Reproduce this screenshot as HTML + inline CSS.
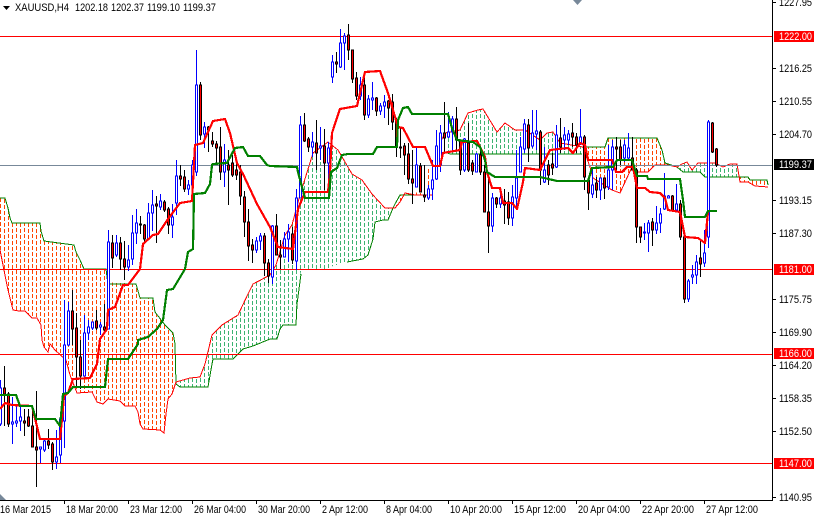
<!DOCTYPE html>
<html><head><meta charset="utf-8"><title>XAUUSD,H4</title>
<style>
html,body{margin:0;padding:0;background:#fff;width:814px;height:516px;overflow:hidden}
svg{display:block}
text{font-family:"Liberation Sans",sans-serif;font-size:11px;fill:#000}
.w{fill:#fff}
</style></head><body>
<svg width="814" height="516" viewBox="0 0 814 516" xmlns="http://www.w3.org/2000/svg">
<defs>
<pattern id="o" patternUnits="userSpaceOnUse" width="16" height="6" shape-rendering="crispEdges"><g fill="#ff4500"><rect x="0" y="0" width="1" height="4"/><rect x="4" y="1" width="1" height="4"/><rect x="8" y="0" width="1" height="4"/><rect x="12" y="1" width="1" height="4"/></g></pattern>
<pattern id="g" patternUnits="userSpaceOnUse" width="16" height="6" shape-rendering="crispEdges"><g fill="#3cb371"><rect x="0" y="0" width="1" height="4"/><rect x="4" y="1" width="1" height="4"/><rect x="8" y="0" width="1" height="4"/><rect x="12" y="1" width="1" height="4"/></g></pattern>
</defs>
<rect width="814" height="516" fill="#fff"/>

<!-- clouds fill -->
<g shape-rendering="crispEdges">
<polygon fill="url(#o)" points="0,198 5,198 8,208 10,218 12,223 40,223 41,231 44,241 74,245 76,252 80,260 84,269 106,269 108,282 136,284 140,298 153,298 155,312 165,325 173,333 175,344 176,382 172,394 168,399 166,414 164,433 160,430 143,429 140,424 138,412 135,406 125,406 120,401 108,399 103,404 97,402 92,392 77,393 70,375 66,360 55,350 50,344 48,352 44,347 42,340 41,325 37,318 32,318 25,311 19,311 13,310 8,290 3,265 0,250"/>
<polygon fill="url(#g)" points="176,382 190,378 200,377 205,364 212,335 222,325 238,315 248,294 253,284 270,275 276,265 285,235 292,225 300,195 313,153 328,142 338,150 352,174 362,180 372,194 385,208 395,208 395,204 388,220 375,222 373,239 368,255 363,259 347,262 330,267 328,270 301,270 299,289 297,304 296,325 283,325 280,329 277,339 270,339 253,346 243,349 238,354 233,359 213,359 212,364 208,387 180,387"/>
<polygon fill="url(#o)" points="395,208 400,202 405,193 415,193 410,195 400,195"/>
<polygon fill="url(#o)" points="418,190 425,167 437,167 433,195 415,195"/>
<polygon fill="url(#g)" points="437,167 440,143 445,133 460,130 468,113 478,110 483,109 497,132 505,123 515,130 525,130 540,140 547,133 553,132 560,143 583,147 585,154 540,154 485,154 450,154 445,152"/>
<polygon fill="url(#o)" points="585,147 605,147 608,138 657,138 662,150 665,163 677,167 668,165 655,165 648,172 638,172 632,167 620,193 612,190 593,178 590,167"/>
<polygon fill="url(#g)" points="677,167 682,164 687,162 692,170 698,163 715,163 723,167 730,164 737,164 740,177 730,177 705,177 700,172 683,172"/>
<polygon fill="url(#o)" points="740,177 748,177 750,180 767,180 768,187 755,186 748,182 740,182"/>
</g>

<!-- cloud borders -->
<g fill="none" stroke-width="1" shape-rendering="crispEdges">
<polyline stroke="#008000" points="0,198 5,198 8,208 10,218 12,223 40,223 41,231 44,241 74,245 76,252 80,260 84,269 106,269 108,285 110,284 136,284 140,298 153,298 155,312 165,325 173,333 175,344 176,384 180,387 208,387 212,364 213,359 233,359 238,354 243,349 253,346 270,339 277,339 280,329 283,325 296,325 297,304 299,289 301,274"/>
<polyline stroke="#008000" points="347,262 363,259 368,255 373,239 375,222 383,220 388,220 393,208 395,204 400,195 415,195"/>
<polyline stroke="#008000" points="445,152 450,154 510,154 533,154 582,154"/>
<polyline stroke="#008000" points="585,147 605,147 608,138 657,138 662,150 665,163 677,167 683,172 700,172 705,177 748,177 750,180 767,180 768,185"/>
<polyline stroke="#ff0000" points="0,250 3,265 8,290 13,310 19,311 25,311 32,318 37,318 41,325 42,340 44,347 48,352 50,344 55,350 66,360 70,375 77,393 92,392 97,402 103,404 108,399 120,401 125,406 135,406 138,412 140,424 143,429 160,430 164,433 166,414 168,399 172,394 176,382 190,378 200,377 205,364 212,335 222,325 238,315 248,294 253,284 270,275 276,265 285,235 292,225 300,195 313,153 328,142 338,150 352,174 362,180 372,194 385,208 395,208 400,202 405,193 415,195 433,195"/>
<polyline stroke="#ff0000" points="440,143 445,133 460,130 468,113 478,110 483,109 497,132 505,123 515,130 525,130 540,140 547,133 553,132 560,143 583,147 590,167 593,178 612,190 620,193 632,167 638,172 648,172 655,165 668,165 677,167 682,164 687,162 692,170 698,163 715,163 723,167 730,164 737,164 740,182 748,182 755,186 768,187"/>
</g>

<!-- horizontal lines -->
<g shape-rendering="crispEdges" stroke-width="1">
<path d="M0 36.5H772M0 269.5H772M0 354.5H772M0 463.5H772" stroke="#ff0000"/>
<path d="M0 165.5H772" stroke="#778899"/>
</g>

<!-- candles -->
<g shape-rendering="crispEdges" stroke-width="1">
<path fill="none" stroke="#000" d="M4.500 366V426M8.500 392V427M24.500 409V436M28.500 409V427M32.500 407V447M36.500 391V487M48.500 429V449M52.500 442V470M72.500 290V345M76.500 313V387M80.500 340V389M96.500 310V330M104.500 304V332M112.500 235V268M120.500 237V270M124.500 241V280M140.500 216V234M144.500 224V244M156.500 196V243M164.500 200V212M168.500 207V234M180.500 165V186M184.500 170V192M200.500 82V140M208.500 126V152M212.500 132V147M216.500 141V165M220.500 127V180M228.500 150V205M232.500 155V177M236.500 160V180M240.500 165V205M244.500 191V237M248.500 209V261M252.500 239V263M264.500 233V276M268.500 259V283M276.500 214V255M280.500 240V269M292.500 227V264M304.500 113V142M308.500 137V152M316.500 120V170M324.500 129V190M336.500 52V73M348.500 24V60M352.500 50V83M356.500 72V100M364.500 78V120M376.500 97V116M388.500 100V125M392.500 94V130M396.500 118V157M400.500 128V158M404.500 143V175M408.500 143V184M412.500 150V204M420.500 163V192M424.500 165V202M444.500 102V152M456.500 107V150M460.500 140V175M468.500 123V172M472.500 160V175M480.500 147V175M484.500 165V212M488.500 172V253M496.500 197V208M504.500 189V224M508.500 192V225M528.500 119V162M540.500 130V185M548.500 160V185M552.500 153V175M560.500 118V153M572.500 123V147M576.500 133V153M584.500 135V190M588.500 177V210M596.500 177V198M604.500 178V199M616.500 137V170M620.500 140V165M632.500 137V170M636.500 168V243M640.500 227V243M652.500 218V246M672.500 195V212M680.500 200V240M684.500 237V303M700.500 240V277M712.500 122V153M716.500 148V167"/>
<path fill="#ff0000" stroke="#000" d="M3.500 388h2v6h-2zM7.500 394h2v30h-2zM23.500 421h2v2h-2zM27.500 417h2v9h-2zM31.500 426h2v21h-2zM35.500 447h2v3h-2zM47.500 441h2v4h-2zM51.500 444h2v18h-2zM71.500 311h2v18h-2zM75.500 328h2v29h-2zM79.500 357h2v19h-2zM95.500 321h2v7h-2zM103.500 327h2v3h-2zM111.500 243h2v15h-2zM119.500 243h2v16h-2zM123.500 259h2v8h-2zM139.500 224h2v1h-2zM143.500 225h2v14h-2zM155.500 204h2v2h-2zM163.500 202h2v8h-2zM167.500 209h2v16h-2zM179.500 176h2v3h-2zM183.500 177h2v12h-2zM199.500 85h2v50h-2zM207.500 127h2v3h-2zM211.500 141h2v3h-2zM215.500 144h2v4h-2zM219.500 147h2v25h-2zM227.500 165h2v5h-2zM231.500 163h2v12h-2zM235.500 170h2v5h-2zM239.500 172h2v24h-2zM243.500 197h2v25h-2zM247.500 222h2v24h-2zM251.500 245h2v5h-2zM263.500 236h2v27h-2zM267.500 263h2v13h-2zM275.500 226h2v29h-2zM279.500 255h2v2h-2zM291.500 234h2v26h-2zM303.500 125h2v16h-2zM307.500 139h2v8h-2zM315.500 143h2v10h-2zM323.500 146h2v17h-2zM335.500 62h2v2h-2zM347.500 35h2v15h-2zM351.500 50h2v29h-2zM355.500 78h2v18h-2zM363.500 85h2v30h-2zM375.500 98h2v13h-2zM387.500 101h2v7h-2zM391.500 102h2v20h-2zM395.500 122h2v25h-2zM399.500 147h2v1h-2zM403.500 146h2v9h-2zM407.500 154h2v25h-2zM411.500 179h2v4h-2zM419.500 166h2v26h-2zM423.500 195h2v2h-2zM443.500 133h2v5h-2zM455.500 119h2v21h-2zM459.500 140h2v30h-2zM467.500 143h2v27h-2zM471.500 163h2v8h-2zM479.500 155h2v17h-2zM483.500 172h2v40h-2zM487.500 212h2v14h-2zM495.500 198h2v6h-2zM503.500 201h2v4h-2zM507.500 202h2v16h-2zM527.500 125h2v23h-2zM539.500 132h2v38h-2zM547.500 165h2v10h-2zM551.500 164h2v4h-2zM559.500 138h2v9h-2zM571.500 133h2v4h-2zM575.500 137h2v8h-2zM583.500 137h2v40h-2zM587.500 180h2v13h-2zM595.500 183h2v7h-2zM603.500 178h2v10h-2zM615.500 147h2v2h-2zM619.500 147h2v13h-2zM631.500 158h2v12h-2zM635.500 170h2v57h-2zM639.500 227h2v10h-2zM651.500 222h2v8h-2zM671.500 196h2v14h-2zM679.500 204h2v33h-2zM683.500 237h2v62h-2zM699.500 258h2v6h-2zM711.500 123h2v29h-2zM715.500 149h2v16h-2z"/>
<path fill="none" stroke="#0000ff" d="M0.500 380V426M12.500 397V444M16.500 406V427M20.500 407V431M40.500 447V463M44.500 439V452M56.500 430V469M60.500 419V463M64.500 300V448M68.500 302V346M84.500 315V376M88.500 320V340M92.500 322V330M100.500 322V335M108.500 230V329M116.500 235V257M128.500 245V271M132.500 215V265M136.500 209V244M148.500 203V239M152.500 190V231M160.500 194V210M172.500 204V238M176.500 160V215M188.500 180V195M192.500 160V186M196.500 50V176M204.500 122V148M224.500 144V187M256.500 237V253M260.500 233V250M272.500 225V284M284.500 232V257M288.500 224V262M296.500 189V270M300.500 116V198M312.500 132V157M320.500 127V160M328.500 142V180M332.500 55V83M340.500 29V68M344.500 33V70M360.500 77V100M368.500 95V118M372.500 82V110M380.500 103V115M384.500 95V118M416.500 148V187M428.500 185V200M432.500 160V200M436.500 130V180M440.500 125V172M448.500 112V138M452.500 116V150M464.500 138V172M476.500 153V172M492.500 193V232M500.500 192V208M512.500 185V226M516.500 150V210M520.500 137V172M524.500 119V153M532.500 110V148M536.500 110V150M544.500 147V183M556.500 125V168M564.500 127V150M568.500 130V145M580.500 109V145M592.500 168V198M600.500 178V200M608.500 145V190M612.500 140V190M624.500 140V162M628.500 133V160M644.500 223V240M648.500 220V252M656.500 206V234M660.500 208V233M664.500 173V210M668.500 195V198M676.500 184V212M688.500 279V302M692.500 265V284M696.500 255V284M704.500 230V267M708.500 120V248"/>
<path fill="#fff" stroke="#0000ff" d="M-0.500 388h2v36h-2zM11.500 422h2v2h-2zM15.500 421h2v2h-2zM19.500 417h2v4h-2zM39.500 447h2v2h-2zM43.500 441h2v9h-2zM55.500 457h2v5h-2zM59.500 419h2v36h-2zM63.500 345h2v76h-2zM67.500 311h2v34h-2zM83.500 333h2v43h-2zM87.500 327h2v6h-2zM91.500 322h2v6h-2zM99.500 325h2v2h-2zM107.500 242h2v87h-2zM115.500 243h2v12h-2zM127.500 260h2v7h-2zM131.500 233h2v26h-2zM135.500 223h2v10h-2zM147.500 213h2v26h-2zM151.500 205h2v8h-2zM159.500 201h2v6h-2zM171.500 217h2v8h-2zM175.500 176h2v27h-2zM187.500 185h2v4h-2zM191.500 165h2v20h-2zM195.500 85h2v87h-2zM203.500 127h2v7h-2zM223.500 160h2v12h-2zM255.500 241h2v9h-2zM259.500 236h2v5h-2zM271.500 226h2v51h-2zM283.500 239h2v18h-2zM287.500 232h2v7h-2zM295.500 198h2v63h-2zM299.500 125h2v73h-2zM311.500 142h2v5h-2zM319.500 146h2v2h-2zM327.500 148h2v15h-2zM331.500 62h2v15h-2zM339.500 43h2v24h-2zM343.500 36h2v7h-2zM359.500 85h2v11h-2zM367.500 99h2v16h-2zM371.500 98h2v2h-2zM379.500 106h2v5h-2zM383.500 102h2v4h-2zM415.500 165h2v22h-2zM427.500 189h2v9h-2zM431.500 180h2v9h-2zM435.500 146h2v33h-2zM439.500 133h2v32h-2zM447.500 132h2v5h-2zM451.500 119h2v13h-2zM463.500 139h2v31h-2zM475.500 154h2v18h-2zM491.500 198h2v28h-2zM499.500 198h2v6h-2zM511.500 197h2v21h-2zM515.500 178h2v20h-2zM519.500 147h2v25h-2zM523.500 124h2v25h-2zM531.500 133h2v13h-2zM535.500 131h2v3h-2zM543.500 170h2v12h-2zM555.500 135h2v32h-2zM563.500 135h2v5h-2zM567.500 134h2v6h-2zM579.500 137h2v6h-2zM591.500 185h2v9h-2zM599.500 178h2v12h-2zM607.500 170h2v17h-2zM611.500 147h2v23h-2zM623.500 145h2v13h-2zM627.500 148h2v10h-2zM643.500 232h2v1h-2zM647.500 223h2v10h-2zM655.500 223h2v7h-2zM659.500 214h2v9h-2zM663.500 196h2v13h-2zM667.500 196h2v2h-2zM675.500 204h2v6h-2zM687.500 281h2v18h-2zM691.500 275h2v2h-2zM695.500 262h2v13h-2zM703.500 253h2v10h-2zM707.500 122h2v115h-2z"/>
</g>

<!-- Kijun & Tenkan -->
<g fill="none" stroke-width="2.200" stroke-linejoin="round" shape-rendering="crispEdges">
<polyline stroke="#ff0000" points="0,409 5,403 12,405 32,406 40,439 60,439 62,419 64,396 68,393 73,379 90,378 97,364 100,339 107,329 108,310 115,307 123,285 128,285 140,269 143,244 153,235 158,234 168,219 180,203 192,201 195,145 203,143 213,121 225,119 230,133 237,163 243,174 257,204 270,227 278,247 293,249 298,209 305,192 328,192 330,172 332,133 340,109 357,106 365,72 380,71 388,93 398,127 403,128 413,147 425,147 433,166 440,166 443,153 460,150 462,142 477,141 485,157 487,172 492,188 500,188 503,203 512,203 517,209 523,182 525,168 540,170 550,150 568,148 573,153 580,143 585,145 588,160 612,160 616,172 622,172 627,167 633,167 637,188 645,188 650,192 660,193 665,198 668,210 680,212 685,237 698,238 705,243 708,212"/>
<polyline stroke="#008000" points="0,395 16,395 20,406 32,406 36,419 55,419 60,426 63,394 68,393 73,387 105,387 108,359 128,359 138,344 138,340 148,337 157,329 163,320 167,290 173,289 185,269 188,252 193,249 194,194 205,193 210,184 212,165 213,164 227,163 235,148 243,147 248,156 260,156 267,165 270,166 297,167 298,172 302,187 305,198 329,198 331,172 337,168 342,155 348,154 373,154 377,147 397,147 398,120 403,108 408,107 412,114 448,114 452,128 457,140 473,142 480,147 485,160 487,172 495,177 540,177 557,181 588,181 592,168 613,167 617,160 632,160 637,176 647,176 648,179 680,179 683,200 685,217 705,217 708,211 717,211"/>
</g>

<!-- axes -->
<g shape-rendering="crispEdges" stroke="#000" stroke-width="1" fill="none">
<path d="M772.500 0V500.500H0"/>
<path d="M773 2.500h3M773 68.500h3M773 101.500h3M773 134.500h3M773 200.500h3M773 233.500h3M773 299.500h3M773 332.500h3M773 365.500h3M773 398.500h3M773 431.500h3M773 497.500h3"/>
<path d="M64.500 501v3M128.500 501v3M192.500 501v3M256.500 501v3M320.500 501v3M384.500 501v3M448.500 501v3M512.500 501v3M576.500 501v3M640.500 501v3M704.500 501v3"/>
</g>

<!-- labels boxes -->
<g shape-rendering="crispEdges">
<rect x="774" y="31" width="40" height="11" fill="#ff0000"/>
<rect x="774" y="264" width="40" height="11" fill="#ff0000"/>
<rect x="774" y="348" width="40" height="11" fill="#ff0000"/>
<rect x="774" y="458" width="40" height="11" fill="#ff0000"/>
<rect x="774" y="159" width="40" height="11" fill="#000"/>
</g>
<g>
<text x="779" y="6" textLength="33" lengthAdjust="spacingAndGlyphs">1227.95</text>
<text class="w" x="779" y="40" textLength="33" lengthAdjust="spacingAndGlyphs">1222.00</text>
<text x="779" y="72" textLength="33" lengthAdjust="spacingAndGlyphs">1216.25</text>
<text x="779" y="105" textLength="33" lengthAdjust="spacingAndGlyphs">1210.55</text>
<text x="779" y="138" textLength="33" lengthAdjust="spacingAndGlyphs">1204.70</text>
<text class="w" x="779" y="168" textLength="33" lengthAdjust="spacingAndGlyphs">1199.37</text>
<text x="779" y="204" textLength="33" lengthAdjust="spacingAndGlyphs">1193.15</text>
<text x="779" y="237" textLength="33" lengthAdjust="spacingAndGlyphs">1187.30</text>
<text class="w" x="779" y="273" textLength="33" lengthAdjust="spacingAndGlyphs">1181.00</text>
<text x="779" y="303" textLength="33" lengthAdjust="spacingAndGlyphs">1175.75</text>
<text x="779" y="336" textLength="33" lengthAdjust="spacingAndGlyphs">1169.90</text>
<text class="w" x="779" y="357" textLength="33" lengthAdjust="spacingAndGlyphs">1166.00</text>
<text x="779" y="369" textLength="33" lengthAdjust="spacingAndGlyphs">1164.20</text>
<text x="779" y="402" textLength="33" lengthAdjust="spacingAndGlyphs">1158.35</text>
<text x="779" y="435" textLength="33" lengthAdjust="spacingAndGlyphs">1152.50</text>
<text class="w" x="779" y="467" textLength="33" lengthAdjust="spacingAndGlyphs">1147.00</text>
<text x="779" y="501" textLength="33" lengthAdjust="spacingAndGlyphs">1140.95</text>

<text x="0" y="513" textLength="51" lengthAdjust="spacingAndGlyphs">16 Mar 2015</text>
<text x="66" y="513" textLength="52" lengthAdjust="spacingAndGlyphs">18 Mar 20:00</text>
<text x="130" y="513" textLength="52" lengthAdjust="spacingAndGlyphs">23 Mar 12:00</text>
<text x="194" y="513" textLength="52" lengthAdjust="spacingAndGlyphs">26 Mar 04:00</text>
<text x="258" y="513" textLength="52" lengthAdjust="spacingAndGlyphs">30 Mar 20:00</text>
<text x="322" y="513" textLength="46" lengthAdjust="spacingAndGlyphs">2 Apr 12:00</text>
<text x="386" y="513" textLength="46" lengthAdjust="spacingAndGlyphs">8 Apr 04:00</text>
<text x="450" y="513" textLength="52" lengthAdjust="spacingAndGlyphs">10 Apr 20:00</text>
<text x="514" y="513" textLength="52" lengthAdjust="spacingAndGlyphs">15 Apr 12:00</text>
<text x="578" y="513" textLength="52" lengthAdjust="spacingAndGlyphs">20 Apr 04:00</text>
<text x="642" y="513" textLength="52" lengthAdjust="spacingAndGlyphs">22 Apr 20:00</text>
<text x="706" y="513" textLength="52" lengthAdjust="spacingAndGlyphs">27 Apr 12:00</text>

<text x="15" y="11" textLength="54" lengthAdjust="spacingAndGlyphs">XAUUSD,H4</text>
<text x="75" y="11" textLength="33" lengthAdjust="spacingAndGlyphs">1202.18</text>
<text x="111" y="11" textLength="33" lengthAdjust="spacingAndGlyphs">1202.37</text>
<text x="147" y="11" textLength="33" lengthAdjust="spacingAndGlyphs">1199.10</text>
<text x="183" y="11" textLength="33" lengthAdjust="spacingAndGlyphs">1199.37</text>
</g>

<!-- small markers -->
<path d="M3 6h7l-3.500 4z" fill="#000"/>
<path d="M573 0h9l-4.500 5z" fill="#778899"/>
<path d="M0 494l6 6h-6z" fill="#778899"/>
</svg>
</body></html>
